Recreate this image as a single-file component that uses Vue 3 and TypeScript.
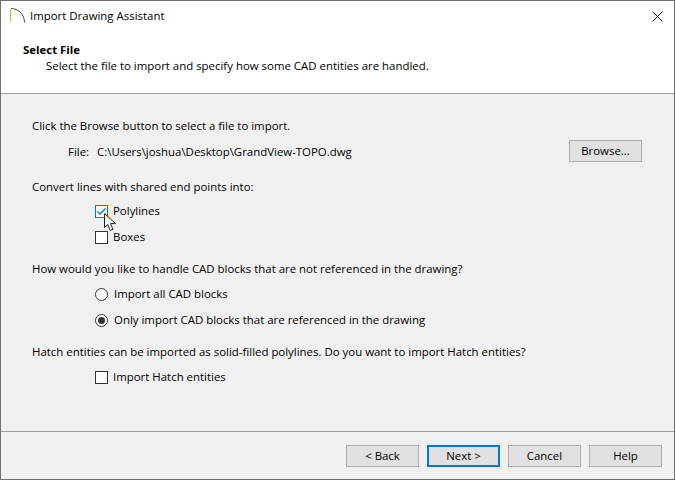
<script setup lang="ts">
const buttons = [
  { label: '< Back', primary: false },
  { label: 'Next >', primary: true },
  { label: 'Cancel', primary: false },
  { label: 'Help', primary: false },
]
</script>

<template>
  <div class="window">
    <header class="head">
      <div class="titlebar">
        <svg class="logo" width="16" height="16" viewBox="0 0 16 16">
          <path d="M.5 15V2" stroke="#a2cf3a" stroke-width="1" fill="none" />
          <path d="M1 1.5C8 1.5 14.5 7 14.5 15.5" stroke="#444" stroke-width="1" fill="none" />
        </svg>
        <span class="title">Import Drawing Assistant</span>
        <svg class="close" width="11" height="11" viewBox="0 0 11 11">
          <path d="M.5.5l10 10M10.5.5l-10 10" stroke="#111" stroke-width="1" fill="none" />
        </svg>
      </div>
      <div class="heading">Select File</div>
      <div class="sub">Select the file to import and specify how some CAD entities are handled.</div>
    </header>

    <main class="body">
      <div class="line first">Click the Browse button to select a file to import.</div>
      <div class="filerow">
        <span class="filelabel">File:</span>
        <span class="path">C:\Users\joshua\Desktop\GrandView-TOPO.dwg</span>
        <button class="btn browse">Browse...</button>
      </div>

      <div class="line sec1">Convert lines with shared end points into:</div>
      <div class="opt o1">
        <span class="check hover">
          <svg width="11" height="11" viewBox="0 0 11 11">
            <path d="M1.5 5.5L4 8l5.5-5.5" stroke="#0078d7" stroke-width="1.4" fill="none" />
          </svg>
        </span>
        <span>Polylines</span>
        <svg class="cursor" width="14" height="20" viewBox="0 0 14 20">
          <path d="M.5.5V14.5L3.8 11.5L6.2 17.5L9 16.3L6.5 10.6H11.5Z" fill="#fff" stroke="#222" stroke-width="1" />
        </svg>
      </div>
      <div class="opt o2">
        <span class="check"></span>
        <span>Boxes</span>
      </div>

      <div class="line sec2">How would you like to handle CAD blocks that are not referenced in the drawing?</div>
      <div class="opt o3">
        <span class="radio"></span>
        <span class="radiolabel">Import all CAD blocks</span>
      </div>
      <div class="opt o4">
        <span class="radio on"><i></i></span>
        <span class="radiolabel">Only import CAD blocks that are referenced in the drawing</span>
      </div>

      <div class="line sec3">Hatch entities can be imported as solid-filled polylines. Do you want to import Hatch entities?</div>
      <div class="opt o5">
        <span class="check"></span>
        <span>Import Hatch entities</span>
      </div>
    </main>

    <footer class="foot">
      <button v-for="b in buttons" :key="b.label" class="btn" :class="{ primary: b.primary }">{{ b.label }}</button>
    </footer>
  </div>
</template>

<style>
html, body { margin: 0; padding: 0; overflow: hidden; }
</style>

<style scoped>
.window {
  width: 675px;
  height: 480px;
  box-sizing: border-box;
  border: 1px solid #707070;
  display: flex;
  flex-direction: column;
  background: #f0f0f0;
  color: #000;
  font-family: "Open Sans", "Noto Sans", sans-serif;
  font-size: 11.43px;
  line-height: 16px;
}
.head {
  height: 93px;
  box-sizing: border-box;
  background: #fff;
  border-bottom: 1px solid #a0a0a0;
  flex: none;
}
.titlebar {
  display: flex;
  align-items: center;
  height: 30px;
  padding: 0 11px 0 9px;
}
.logo { flex: none; margin-top: -2px; }
.title { margin-left: 4px; flex: 1; }
.close { flex: none; }
.heading { margin: 11px 0 0 22px; font-weight: 700; }
.sub { margin: 0 0 0 45px; }
.body { flex: 1; padding: 0 32px 0 31px; min-height: 0; border-bottom: 1px solid #a0a0a0; }
.line { height: 16px; }
.first { margin-top: 24px; }
.filerow { display: flex; align-items: center; height: 22px; margin-top: 6px; }
.filelabel { margin: 2px 0 0 36px; width: 29px; }
.path { flex: 1; margin-top: 2px; }
.sec1 { margin-top: 17px; }
.sec2 { margin-top: 16px; }
.sec3 { margin-top: 16px; }
.opt { display: flex; align-items: center; height: 16px; margin-left: 63px; position: relative; }
.o1 { margin-top: 8px; }
.o2 { margin-top: 10px; }
.o3 { margin-top: 9px; }
.o4 { margin-top: 10px; }
.o5 { margin-top: 9px; }
.check {
  width: 13px; height: 13px; box-sizing: border-box; border: 1px solid #333;
  background: #fff; margin-right: 5px; flex: none; display: flex;
}
.check.hover { border-color: #0078d7; }
.radio {
  width: 13px; height: 13px; box-sizing: border-box; border: 1px solid #333; border-radius: 50%;
  background: #fff; margin-right: 6px; flex: none; display: flex; align-items: center; justify-content: center;
}
.radio i { width: 7px; height: 7px; border-radius: 50%; background: #333; display: block; }
.cursor { position: absolute; left: 9px; top: 10px; }
.btn {
  font: inherit;
  width: 73px;
  height: 22px;
  box-sizing: border-box;
  padding: 0;
  border: 1px solid #adadad;
  background: #e1e1e1;
  color: #000;
  flex: none;
}
.btn.primary { border: 2px solid #0078d7; }
.foot {
  flex: none;
  height: 47px;
  box-sizing: border-box;
  display: flex;
  justify-content: flex-end;
  gap: 8px;
  padding: 13px 12px 0 0;
}
</style>
